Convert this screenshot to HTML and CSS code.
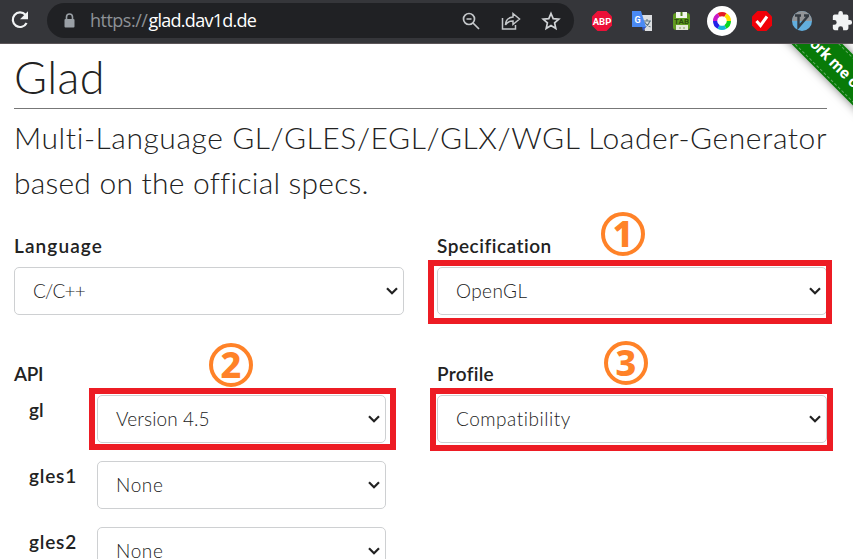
FILE: index.html
```
<!DOCTYPE html>
<html lang="en">
<head>
<meta charset="utf-8">
<title>Glad</title>
<link rel="stylesheet" href="styles.css">
</head>
<body>
<header class="toolbar">
  <svg class="reload" width="20" height="20" viewBox="0 0 20 20"><path d="M15.500 4.800A7.300 7.300 0 1 0 16.600 13" fill="none" stroke="#f1f3f4" stroke-width="2.200"/><path d="M18 1.200v8h-8z" fill="#f1f3f4"/></svg>
  <div class="omnibox">
    <svg class="lock" width="12" height="16" viewBox="0 0 12 16"><rect x="0.500" y="6" width="10" height="8.500" rx="1" fill="#9aa0a6"/><path d="M2.500 6V4a3 3 0 0 1 6 0v2" fill="none" stroke="#9aa0a6" stroke-width="1.600"/></svg>
    <span class="url"><span class="scheme">https://</span><span class="host">glad.dav1d.de</span></span>
    <div class="actions">
      <svg width="20" height="20" viewBox="0 0 20 20" fill="none" stroke="#c4c7ca" stroke-width="1.700"><circle cx="8" cy="8" r="5.500"/><path d="M5.500 8h5M12 12l6 6"/></svg>
      <svg width="20" height="20" viewBox="0 0 20 20" fill="none" stroke="#c4c7ca" stroke-width="1.500"><path d="M1.500 7v11h13v-4M12 6V2.500l6.500 5.500-6.500 5.500V10c-3.500 0-6 1-7.500 4 0-4.500 3-7.500 7.500-8z"/></svg>
      <svg width="20" height="20" viewBox="0 0 20 20" fill="none" stroke="#d0d3d6" stroke-width="1.700"><path d="M10 2.500l2.200 5.200 5.600.5-4.200 3.700 1.200 5.500-4.800-2.900-4.800 2.900 1.200-5.500-4.200-3.700 5.600-.5z"/></svg>
    </div>
  </div>
  <div class="extensions">
    <svg width="22" height="22" viewBox="0 0 22 22"><path d="M6.500 1h9L21 6.500v9L15.500 21h-9L1 15.500v-9z" fill="#ec1138"/><text class="abp" x="11" y="14.600" text-anchor="middle">ABP</text></svg>
    <svg width="22" height="22" viewBox="0 0 22 22"><path d="M9 5h12v16H14z" fill="#dcdee1"/><path d="M12 11h8M16 9v2M19 11c-1 3-3 5-5 6M13.500 12c1.500 3 3 4 6 5" fill="none" stroke="#5d7480" stroke-width="1.100"/><path d="M1 1h9l5 16H1z" fill="#4a8af4"/><path d="M11 17h4l-3 4z" fill="#3257c6"/><text class="g" x="6.500" y="12.500" text-anchor="middle">G</text></svg>
    <svg width="22" height="22" viewBox="0 0 22 22"><rect x="2" y="3" width="17" height="17" rx="3" fill="#609b20"/><path d="M5 2h11v6H5z" fill="#f3f5ef"/><path d="M9.500 2h2v4h-2z" fill="#538321"/><path d="M5 15h12v5H5z" fill="#e6ead9"/><path d="M8 17h2v2H8zM12 17h2v2h-2z" fill="#b5c59a"/><text class="tab" x="10.500" y="13.500" text-anchor="middle">TAB</text></svg>
    <svg class="wheel" width="30" height="30" viewBox="0 0 30 30"><circle cx="15" cy="15" r="15" fill="#fff"/><g fill="none" stroke-width="4.200"><path d="M11.550 9.020A6.900 6.900 0 0 1 18.450 9.020" stroke="#e51b24"/><path d="M18.450 9.020A6.900 6.900 0 0 1 21.900 15" stroke="#ffe000"/><path d="M21.900 15A6.900 6.900 0 0 1 18.450 20.980" stroke="#08d620"/><path d="M18.450 20.980A6.900 6.900 0 0 1 11.550 20.980" stroke="#12b5d8"/><path d="M11.550 20.980A6.900 6.900 0 0 1 8.100 15" stroke="#2222e8"/><path d="M8.100 15A6.900 6.900 0 0 1 11.550 9.020" stroke="#c818c8"/></g></svg>
    <svg width="22" height="22" viewBox="0 0 22 22"><path d="M6.500 1h9L21 6.500v9L15.500 21h-9L1 15.500v-9z" fill="#f00008"/><path d="M5.500 11l4 4.500 6.500-9" fill="none" stroke="#fff" stroke-width="3"/></svg>
    <svg width="22" height="22" viewBox="0 0 22 22"><circle cx="11" cy="11" r="10" fill="#62aedd"/><path d="M1 11a10 10 0 0 1 20 0z" fill="#929598"/><path d="M4 5.500h6M7.500 6v11L17 6M13 5.500h5" fill="none" stroke="#343b42" stroke-width="2.400"/></svg>
    <svg width="22" height="22" viewBox="0 0 24 24"><path d="M20.500 11H19V7a2 2 0 0 0-2-2h-4V3.500a2.500 2.500 0 0 0-5 0V5H4a2 2 0 0 0-2 2v3.800h1.500a2.700 2.700 0 0 1 0 5.400H2V20a2 2 0 0 0 2 2h3.800v-1.500a2.700 2.700 0 0 1 5.400 0V22H17a2 2 0 0 0 2-2v-4h1.500a2.500 2.500 0 0 0 0-5z" fill="#f1f3f4"/></svg>
  </div>
</header>
<main class="page">
  <div class="ribbon-clip"><div class="ribbon"><span>Fork me on GitHub</span></div></div>
  <h1 class="title">Glad</h1>
  <p class="lead"><span class="lead-a">Multi-Language GL/GLES/EGL/GLX/WGL Loader-Generator</span><br><span class="lead-b">based on the official specs.</span></p>
  <form class="form">
    <section class="field">
      <label class="label l-language">Language</label>
      <div class="select"><span class="v-c">C/C++</span><svg class="chevron" width="12" height="8" viewBox="0 0 12 8"><path d="M1 1.200l5 5 5-5"/></svg></div>
    </section>
    <section class="field">
      <label class="label l-spec">Specification</label>
      <div class="select"><span class="v-open">OpenGL</span><svg class="chevron" width="12" height="8" viewBox="0 0 12 8"><path d="M1 1.200l5 5 5-5"/></svg><i class="mark mark-spec"></i></div>
      <b class="num num-one">1</b>
    </section>
    <section class="field">
      <label class="label l-api">API</label>
      <div class="rows">
        <div class="row"><label class="label">gl</label><div class="select"><span class="v-ver">Version 4.5</span><svg class="chevron" width="12" height="8" viewBox="0 0 12 8"><path d="M1 1.200l5 5 5-5"/></svg><i class="mark mark-gl"></i></div></div>
        <div class="row"><label class="label l-gles">gles1</label><div class="select"><span class="v-none">None</span><svg class="chevron" width="12" height="8" viewBox="0 0 12 8"><path d="M1 1.200l5 5 5-5"/></svg></div></div>
        <div class="row"><label class="label l-gles">gles2</label><div class="select"><span class="v-none">None</span><svg class="chevron" width="12" height="8" viewBox="0 0 12 8"><path d="M1 1.200l5 5 5-5"/></svg></div></div>
      </div>
      <b class="num num-two">2</b>
    </section>
    <section class="field">
      <label class="label l-profile">Profile</label>
      <div class="select"><span class="v-comp">Compatibility</span><svg class="chevron" width="12" height="8" viewBox="0 0 12 8"><path d="M1 1.200l5 5 5-5"/></svg><i class="mark mark-profile"></i></div>
      <b class="num num-three">3</b>
    </section>
  </form>
</main>
</body>
</html>
```
FILE: styles.css
```
* { box-sizing: border-box; }
html, body { height: 100%; }
body {
  margin: 0;
  display: flex;
  flex-direction: column;
  overflow: hidden;
  background: #fff;
  color: #222;
  font-family: Lato, "Open Sans", sans-serif;
}

.toolbar {
  flex: none;
  display: flex;
  align-items: flex-start;
  height: 44px;
  padding-top: 3px;
  background: #35363a;
  border-bottom: 1px solid #5b5558;
}
.reload { margin: 7px 17px 0 10px; }
.omnibox {
  display: flex;
  align-items: center;
  width: 528px;
  height: 35px;
  padding: 0 13px 0 17px;
  border-radius: 18px;
  background: #202124;
}
.lock { margin-right: 14px; }
.url {
  font: 18px/35px "Open Sans", sans-serif;
  color: #fff;
}
.scheme { color: #8d9196; letter-spacing: -.5px; }
.host { font-weight: 500; letter-spacing: -.72px; margin-left: 1px; }
.actions { display: flex; gap: 20px; margin-left: auto; }
.extensions {
  display: flex;
  align-items: center;
  gap: 18px;
  height: 35px;
  margin-left: 17px;
}
.extensions svg { flex: none; }
.extensions .wheel { margin: 0 -4px; }
.abp { font: bold 9.500px Roboto, sans-serif; fill: #fff; }
.g { font: bold 9px Roboto, sans-serif; fill: #fff; }
.tab { font: bold 8px Roboto, sans-serif; fill: #2d4e0c; }

.page {
  position: relative;
  flex: 1;
  padding: 0 26px 0 14px;
  overflow: hidden;
}
.title {
  height: 65px;
  margin: 0;
  border-bottom: 1px solid #777;
  font-size: 45px;
  font-weight: 300;
  letter-spacing: .4px;
  line-height: 67px;
}
.lead {
  margin: 6px 0 0;
  font-size: 30px;
  font-weight: 300;
  line-height: 45px;
  white-space: nowrap;
}
.lead-a { letter-spacing: .57px; }
.lead-b { letter-spacing: .22px; }
.form {
  display: grid;
  grid-template-columns: 390px 390px;
  column-gap: 33px;
  row-gap: 44px;
  margin-top: 26px;
}
.field { position: relative; min-width: 0; }
.label {
  display: block;
  font-size: 19px;
  font-weight: 600;
  line-height: 28px;
}
.field > .label { margin-bottom: 6px; height: 30px; line-height: 29px; }
.l-language { letter-spacing: 1.1px; }
.l-spec { letter-spacing: .52px; }
.l-api { letter-spacing: -.3px; }
.l-profile { letter-spacing: .3px; }
.l-gles { letter-spacing: .8px; }
.select {
  position: relative;
  display: flex;
  align-items: center;
  justify-content: space-between;
  height: 48px;
  padding: 0 5px 2px 18px;
  border: 1px solid #ced0d2;
  border-radius: 5px;
  background: #fff;
  font-size: 19px;
  font-weight: 300;
}
.v-c { letter-spacing: -.8px; }
.v-open { letter-spacing: .4px; }
.v-ver { letter-spacing: .1px; }
.v-none { letter-spacing: .6px; }
.v-comp { letter-spacing: .52px; }
.chevron { margin-top: 2px; }
.chevron path {
  fill: none;
  stroke: #222;
  stroke-width: 2.2;
}
.rows { display: grid; gap: 18px; }
.row {
  display: grid;
  grid-template-columns: 68px 289px;
  padding-left: 15px;
}
.row .label { margin-top: 1px; }

.mark {
  position: absolute;
  border: 6px solid #ed1c24;
}
.mark-spec { inset: -8px -6px -10px -10px; }
.mark-gl { inset: -8px -11px -8px -9px; }
.mark-profile { inset: -8px -7px -9px -8px; }
.num {
  position: absolute;
  display: flex;
  align-items: center;
  justify-content: center;
  width: 44px;
  height: 44px;
  border: 4px solid #ff8228;
  border-radius: 50%;
  color: #ff8228;
  font: 800 36px/36px "Noto Sans", sans-serif;
}
.num-one { left: 164px; top: -19px; }
.num-two { left: 195px; top: -16px; }
.num-three { left: 167px; top: -18px; }

.ribbon-clip {
  position: absolute;
  top: 0;
  right: 0;
  width: 200px;
  height: 156px;
  overflow: hidden;
}
.ribbon {
  position: absolute;
  top: -1px;
  right: -111px;
  width: 260px;
  height: 36px;
  padding: 2px 0;
  background: #087a08;
  box-shadow: 0 0 10px rgba(0, 0, 0, .5);
  transform: rotate(45deg);
}
.ribbon span {
  display: block;
  height: 32px;
  padding-left: 92px;
  border: dashed #63a963;
  border-width: 1px 0;
  color: #fff;
  font: bold 16px/31px Roboto, sans-serif;
  white-space: nowrap;
}
```
